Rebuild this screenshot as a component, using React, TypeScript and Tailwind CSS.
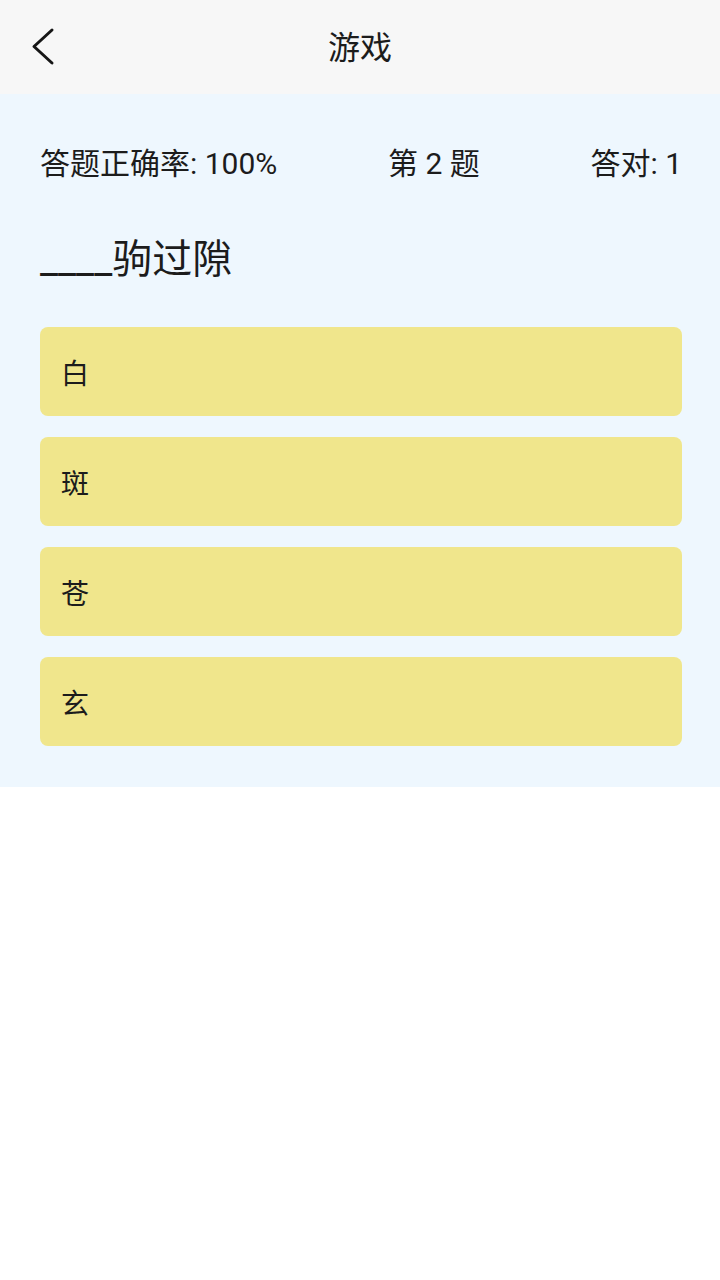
export default function App() {
  const options = ["白", "斑", "苍", "玄"]

  return (
    <div
      className="min-h-[1280px] w-[720px] bg-white text-[#1c1c1c]"
      style={{ fontFamily: 'Roboto, "Noto Sans CJK SC", sans-serif' }}
    >
      {/* Header */}
      <header className="grid h-[94px] grid-cols-[1fr_auto_1fr] items-center bg-[#f7f7f7]">
        <div className="flex items-center pl-[31px]">
          <svg width="24" height="40" viewBox="0 0 24 40" fill="none">
            <polyline
              points="21,3 3,19.5 21,36"
              stroke="#161616"
              strokeWidth="3"
              strokeLinecap="round"
              strokeLinejoin="round"
            />
          </svg>
        </div>
        <h1 className="pt-[2px] text-[32px] leading-none">游戏</h1>
        <div />
      </header>

      {/* Quiz */}
      <main className="bg-[#eef7fe] pt-[50px] pr-[38px] pb-[41px] pl-10">
        <div className="flex h-10 items-center justify-between text-[30px] leading-10">
          <span>答题正确率: 100%</span>
          <span>第 2 题</span>
          <span>答对: 1</span>
        </div>

        <p className="mt-[51px] h-[50px] text-[40px] leading-[50px]">____驹过隙</p>

        <div className="mt-[42px] flex flex-col gap-[21px]">
          {options.map((o) => (
            <button
              key={o}
              className="flex h-[89px] items-center rounded-lg bg-[#f0e68c] pt-[6px] pl-[21px] text-left text-[28px]"
            >
              {o}
            </button>
          ))}
        </div>
      </main>
    </div>
  )
}
